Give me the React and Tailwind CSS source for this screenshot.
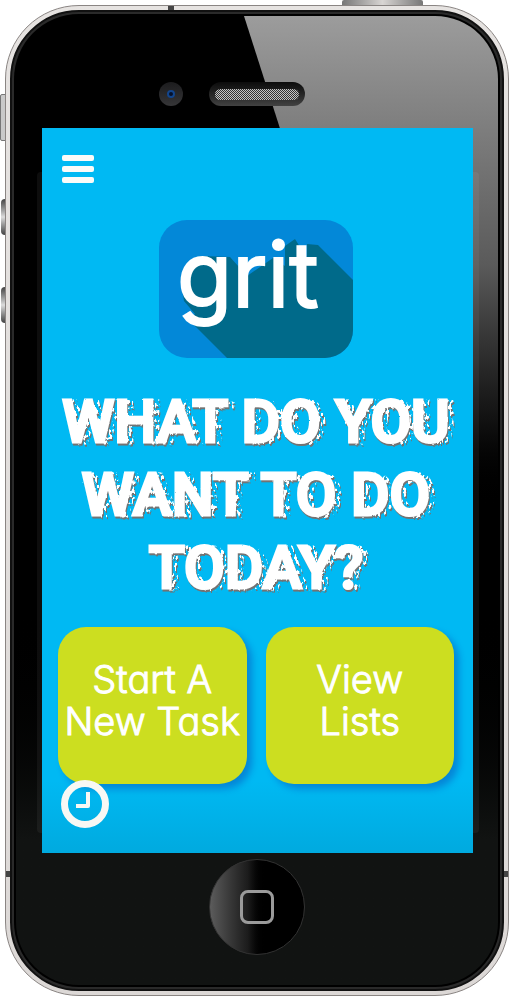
function RoughFilter() {
  return (
    <svg className="absolute size-0" aria-hidden="true">
      <filter id="worn" x="-5%" y="-5%" width="110%" height="110%" colorInterpolationFilters="sRGB">
        <feTurbulence type="fractalNoise" baseFrequency="0.3" numOctaves="1" seed="4" result="noise" />
        <feDisplacementMap in="SourceGraphic" in2="noise" scale="2" xChannelSelector="R" yChannelSelector="G" result="rough" />
        <feTurbulence type="fractalNoise" baseFrequency="0.35 0.2" numOctaves="2" seed="9" result="grain" />
        <feColorMatrix in="grain" type="matrix" values="0 0 0 0 1  0 0 0 0 1  0 0 0 0 1  16 0 0 0 -8.8" result="specks" />
        <feOffset in="rough" dx="6" dy="1" result="echo" />
        <feComposite in="echo" in2="specks" operator="in" result="echoSpecks" />
        <feMerge result="ink">
          <feMergeNode in="echoSpecks" />
          <feMergeNode in="rough" />
        </feMerge>
        <feOffset in="ink" dx="1" dy="2" result="drop" />
        <feColorMatrix in="drop" type="matrix" values="0 0 0 0 0.45  0 0 0 0 0.45  0 0 0 0 0.45  0 0 0 1 0" result="shade" />
        <feMerge>
          <feMergeNode in="shade" />
          <feMergeNode in="ink" />
        </feMerge>
      </filter>
    </svg>
  );
}

function Logo() {
  return (
    <div className="relative h-[138px] w-[194px] overflow-hidden rounded-[28px] bg-[#0388d8]">
      <svg viewBox="0 0 194 138" className="absolute inset-0 size-full" aria-hidden="true">
        <path
          fill="#006a8a"
          d="M30 100 L68 138 H194 V60 L159 25 L148 24 V38 L136 19 L126 26 V46 L114 38 L88 56 L71 37 L42 36 L27 48 L22 62 L25 81 L36 94 Z"
        />
      </svg>
      <p className="relative pl-[18px] font-[Inter,sans-serif] text-[90px] leading-[110px] font-normal text-white [stroke-linejoin:round] [-webkit-text-stroke:2px_white]">
        grit
      </p>
    </div>
  );
}

function TaskButton({ children }) {
  return (
    <button
      type="button"
      className="flex h-[157px] flex-1 items-center justify-center rounded-[28px] bg-[#ccde20] pb-3 text-center font-[Inter,sans-serif] text-[38px] leading-[42px] font-light whitespace-nowrap text-white shadow-[5px_5px_7px_#0586d6] [font-feature-settings:'cv11'] [-webkit-text-stroke:1px_white]"
    >
      <span>{children}</span>
    </button>
  );
}

function Screen() {
  return (
    <main className="relative mr-[25px] ml-[26px] flex min-h-[725px] flex-col bg-linear-to-b from-[#00b9f3] from-90% to-[#00aadf] pt-[27px] pr-[19px] pl-4">
      <button type="button" aria-label="Menu" className="ml-1 flex w-8 flex-col gap-[5px]">
        <span className="h-[6px] w-full rounded-xs bg-[#fbfbf8]" />
        <span className="h-[6px] w-full rounded-xs bg-[#fbfbf8]" />
        <span className="h-[6px] w-full rounded-xs bg-[#fbfbf8]" />
      </button>
      <div className="mt-[37px] flex justify-center">
        <Logo />
      </div>
      <h1 className="mt-[27px] text-center font-[Roboto,sans-serif] text-[59px] leading-[73px] font-medium whitespace-nowrap text-white [filter:url(#worn)] [-webkit-text-stroke:3px_white]">
        WHAT DO YOU
        <br />
        WANT TO DO
        <br />
        TODAY?
      </h1>
      <div className="mt-[23px] flex gap-[19px]">
        <TaskButton>
          Start A<br />
          New Task
        </TaskButton>
        <TaskButton>
          View
          <br />
          Lists
        </TaskButton>
      </div>
      <button type="button" aria-label="History" className="relative -mt-1 ml-[3px] size-12">
        <svg viewBox="0 0 48 48" className="size-12" fill="none" stroke="#f8f8f4">
          <circle cx="24" cy="24" r="20.5" strokeWidth="7" />
          <path d="M27 12V26H15" strokeWidth="4" strokeLinejoin="round" />
        </svg>
      </button>
    </main>
  );
}

function Earpiece() {
  return (
    <div className="relative grid grid-cols-[1fr_auto_1fr] items-center pt-[66px] pb-[22px]">
      <div className="mr-[26px] flex size-6 items-center justify-center justify-self-end rounded-full bg-linear-to-b from-[#1c1c1e] to-[#363638]">
        <span className="size-2 rounded-full border-2 border-[#12458c] bg-[#04102a]" />
      </div>
      <div className="flex h-6 w-[96px] items-center rounded-full bg-linear-to-b from-[#0c0c0c] to-[#424242] px-[6px]">
        <div className="h-[11px] w-full rounded-full bg-[#333] bg-[conic-gradient(#c4c4c4_25%,#333_0_50%,#c4c4c4_0_75%,#333_0)] bg-size-[2px_2px]" />
      </div>
    </div>
  );
}

export default function App() {
  return (
    <div className="relative bg-white pt-[5px] pr-px pb-[3px] pl-[5px]">
      <RoughFilter />
      <div className="absolute top-0 right-[87px] h-[6px] w-[81px] rounded-t-xs bg-linear-to-r from-[#777] via-[#d8d5d3] to-[#777]" />
      <div className="absolute top-[94px] left-0 h-[47px] w-[6px] rounded-l-xs border border-[#777] bg-[#c9c9c9]" />
      <div className="absolute top-[199px] left-px h-9 w-[5px] rounded-l bg-linear-to-b from-[#444] via-[#ddd] to-[#444]" />
      <div className="absolute top-[287px] left-px h-9 w-[5px] rounded-l bg-linear-to-b from-[#444] via-[#ddd] to-[#444]" />

      <div className="relative overflow-hidden rounded-[74px] border border-[#8a8583] bg-linear-to-b from-[#e6e3e1] to-[#dcd8d6] p-1">
        <div className="absolute top-0 left-[162px] h-1 w-[6px] bg-[#444]" />
        <div className="absolute top-[865px] left-0 h-[6px] w-1 bg-[#444]" />
        <div className="absolute top-[865px] right-0 h-[6px] w-1 bg-[#444]" />
        <div className="rounded-[69px] border-2 border-[#111] bg-[#2a2a2a] p-[2px]">
          <div className="rounded-[65px] bg-black p-[2px]">
            <div className="relative overflow-hidden rounded-[63px] bg-linear-to-b from-black from-60% to-[#111312] to-85%">
              <div className="absolute top-0 right-0 left-[228px] h-[500px] bg-linear-to-b from-[#9c9c9c] via-[#5a5a5a] via-50% to-black [clip-path:polygon(0_0,100%_0,100%_100%,160px_100%)]" />
              <div className="absolute top-[156px] right-[19px] bottom-[152px] left-[21px] rounded bg-white/5" />
              <Earpiece />
              <Screen />
              <div className="relative flex justify-center pt-[6px] pb-[30px]">
                <button
                  type="button"
                  aria-label="Home"
                  className="flex size-24 items-center justify-center rounded-full border border-[#333] bg-linear-to-r from-[#5c5c5c] via-[#1c1c1c] via-40% to-black to-60%"
                >
                  <span className="size-[34px] rounded-lg border-3 border-[#9b9b9b]" />
                </button>
              </div>
            </div>
          </div>
        </div>
      </div>
    </div>
  );
}
